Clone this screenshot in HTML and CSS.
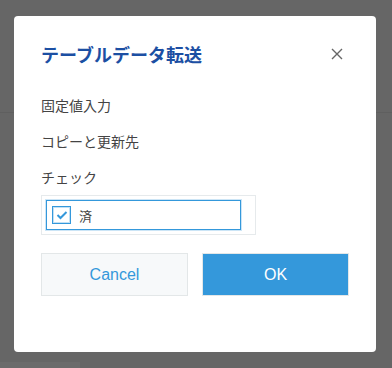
FILE: index.html
```html
<!DOCTYPE html>
<html lang="ja">
  <head>
    <meta charset="UTF-8" />
    <meta name="viewport" content="width=device-width, initial-scale=1.0" />
    <title>テーブルデータ転送</title>
    <link rel="stylesheet" href="styles.css">
  </head>
  <body>
    <div class="backdrop-top"></div>
    <div class="backdrop-foot"></div>

    <div class="dialog">
      <div class="dialog-header">
        <h2 class="dialog-title">テーブルデータ転送</h2>
        <button class="close" aria-label="閉じる">
          <svg width="12" height="12" viewBox="0 0 12 12">
            <path d="M1 1 L11 11 M11 1 L1 11" stroke="#666" stroke-width="1.4" fill="none" />
          </svg>
        </button>
      </div>

      <div class="dialog-body">
        <p class="label">固定値入力</p>
        <p class="label">コピーと更新先</p>
        <p class="label">チェック</p>
        <div class="check-field">
          <label class="check-item">
            <span class="check-box">
              <svg width="12" height="10" viewBox="0 0 12 10">
                <path d="M1.5 5 L4.5 8 L10.5 2" stroke="#3498db" stroke-width="2" fill="none" />
              </svg>
            </span>
            <span class="check-text">済</span>
          </label>
        </div>
      </div>

      <div class="dialog-footer">
        <button class="btn btn-cancel">Cancel</button>
        <button class="btn btn-ok">OK</button>
      </div>
    </div>
  </body>
</html>
```

FILE: styles.css
```css
body {
  margin: 0;
  background-color: #666666;
  font-family: "Noto Sans CJK JP", "Liberation Sans", sans-serif;
  width: 392px;
  height: 368px;
  overflow: hidden;
  position: relative;
}
.backdrop-top {
  height: 112px;
  border-bottom: 1px solid #5f5f5f;
}
.backdrop-foot {
  position: absolute;
  left: 0;
  top: 362px;
  width: 80px;
  height: 6px;
  background: #6b6b6b;
}
.dialog {
  position: absolute;
  left: 14px;
  top: 16px;
  width: 362px;
  height: 336px;
  background: #ffffff;
  border-radius: 4px;
  box-sizing: border-box;
  padding: 0 27px;
}
.dialog-header {
  display: flex;
  justify-content: space-between;
  align-items: center;
  padding-top: 26px;
}
.dialog-title {
  margin: 0;
  font-size: 18px;
  line-height: 24px;
  font-weight: bold;
  color: #1c4fa3;
}
.close {
  width: 24px;
  height: 24px;
  border: none;
  background: none;
  padding: 0;
  display: flex;
  align-items: center;
  justify-content: center;
  cursor: pointer;
}
.dialog-body {
  padding-top: 29px;
}
.label {
  margin: 0 0 16px 0;
  font-size: 14px;
  line-height: 20px;
  color: #444444;
}
.label:nth-of-type(3) {
  margin-bottom: 8px;
}
.check-field {
  width: 215px;
  height: 40px;
  box-sizing: border-box;
  border: 1px solid #e6eaec;
  padding: 4px;
}
.check-item {
  width: 195px;
  height: 30px;
  box-sizing: border-box;
  border: 1px solid #3498db;
  box-shadow: 0 0 0 1px rgba(52, 152, 219, 0.25);
  display: flex;
  align-items: center;
  padding-left: 5px;
  gap: 8px;
}
.check-box {
  width: 19px;
  height: 18px;
  box-sizing: border-box;
  border: 1px solid #3498db;
  box-shadow: inset 0 0 0 1px rgba(52, 152, 219, 0.3);
  display: flex;
  align-items: center;
  justify-content: center;
}
.check-text {
  font-size: 13px;
  color: #444444;
}
.dialog-footer {
  display: flex;
  gap: 14px;
  margin-top: 18px;
}
.btn {
  width: 147px;
  height: 43px;
  font-family: "Liberation Sans", Arial, sans-serif;
  font-size: 16px;
  cursor: pointer;
  box-sizing: border-box;
}
.btn-cancel {
  background: #f7f9fa;
  border: 1px solid #e3e7e8;
  color: #3498db;
}
.btn-ok {
  background: #3498db;
  border: 1px solid #e3e7e8;
  color: #ffffff;
}
```
